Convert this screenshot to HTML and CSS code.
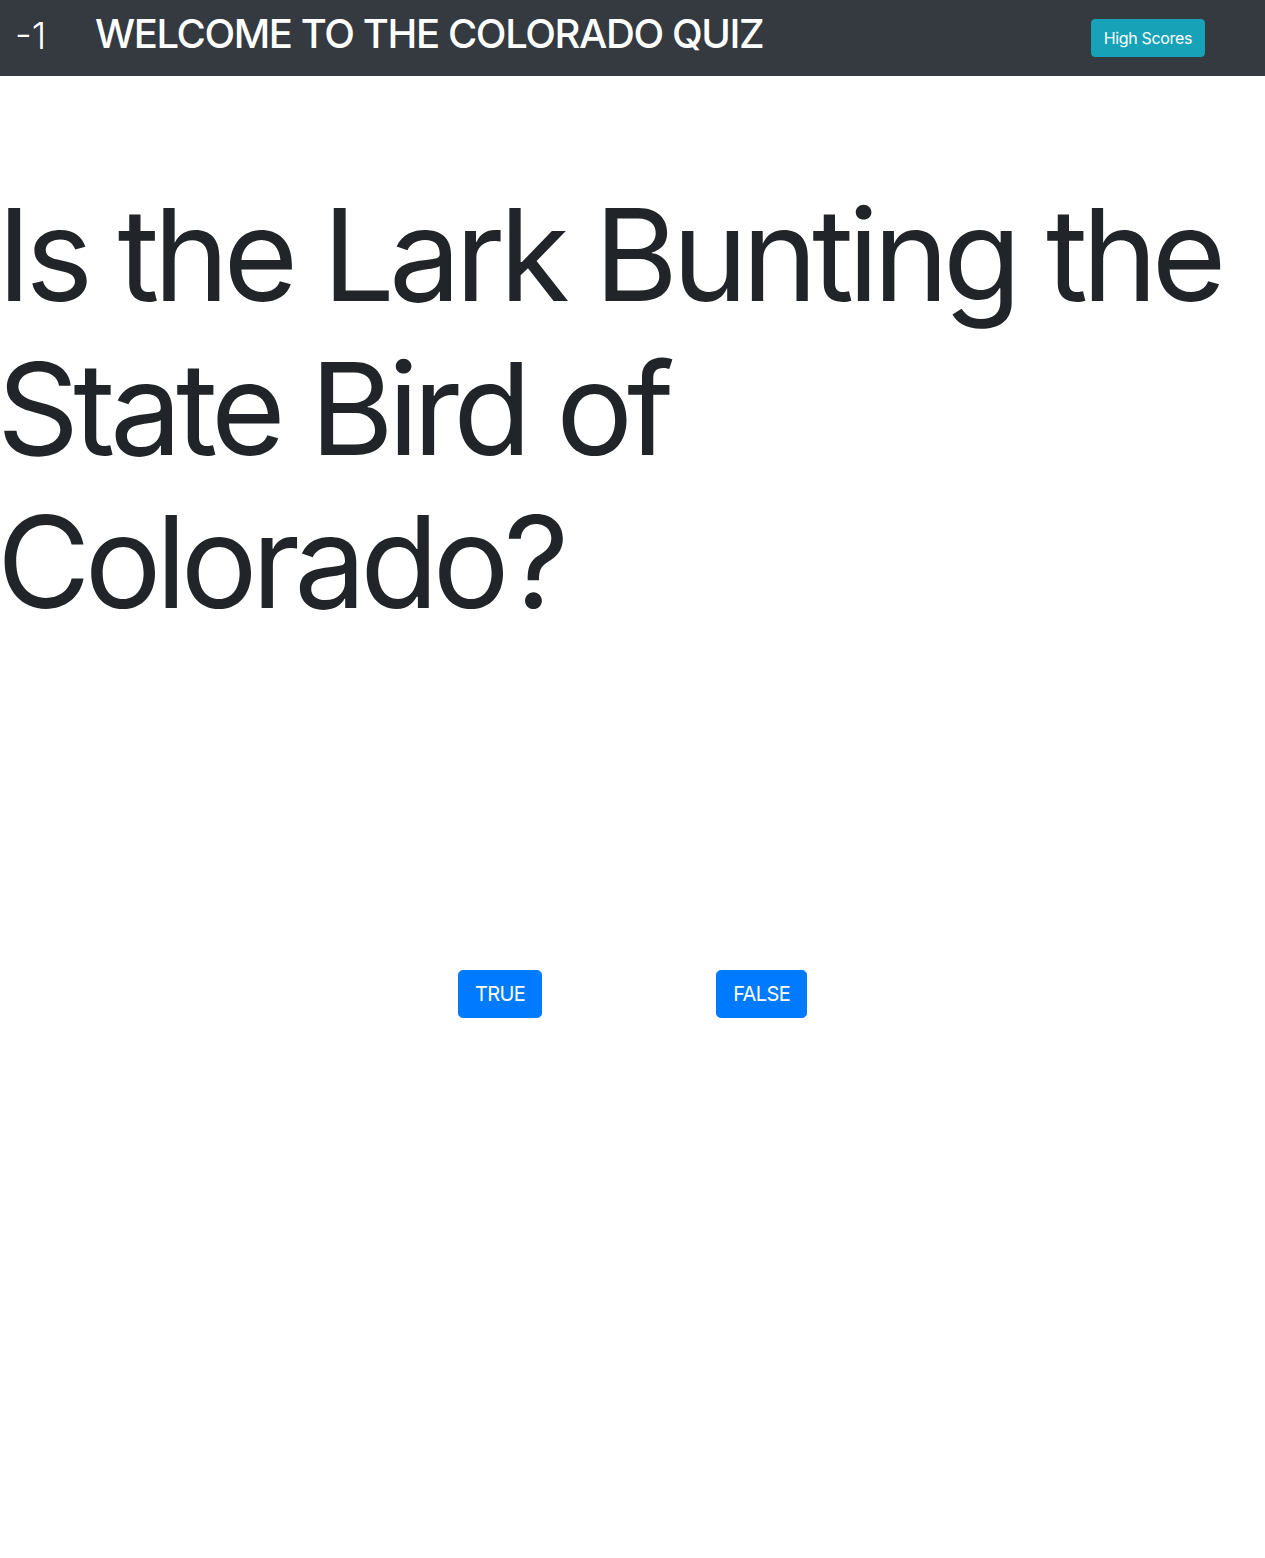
FILE: index.html
```html
<!DOCTYPE html>
<html lang="en">
<head>
<meta charset="utf-8">
<title>Colorado Quiz</title>
<link rel="stylesheet" href="styles.css">
</head>
<body>
<header class="topbar">
  <span class="score">-1</span>
  <h1 class="title">WELCOME TO THE COLORADO QUIZ</h1>
  <button class="btn btn-info">High Scores</button>
</header>
<main class="quiz">
  <h2 class="question">Is the Lark Bunting the State Bird of Colorado?</h2>
  <div class="answers">
    <button class="btn btn-primary btn-lg">TRUE</button>
    <button class="btn btn-primary btn-lg">FALSE</button>
  </div>
</main>
</body>
</html>
```
FILE: styles.css
```css
* { box-sizing: border-box; }
html, body { margin: 0; padding: 0; }
body {
  font-family: Inter, "Noto Sans", "Liberation Sans", sans-serif;
  color: #212529;
  background: #fff;
}
.topbar {
  height: 76px;
  background: #343a40;
  display: flex;
  align-items: flex-start;
  padding: 0 60px 0 15px;
  color: #fff;
}
.score {
  font-size: 37px;
  font-weight: 300;
  line-height: 1.2;
  margin-top: 14px;
  width: 80px;
}
.title {
  margin: 10px 0 0 0;
  font-size: 40px;
  font-weight: 500;
  line-height: 1.2;
  letter-spacing: -1.4px;
  flex: 1;
}
.btn {
  font-family: inherit;
  border: 1px solid transparent;
  color: #fff;
  cursor: pointer;
  border-radius: 4px;
}
.btn-info {
  margin-top: 19px;
  background: #17a2b8;
  border-color: #17a2b8;
  font-size: 16px;
  line-height: 24px;
  padding: 6px 12px;
  height: 38px;
  letter-spacing: -0.35px;
}
.quiz { padding-top: 102px; }
.question {
  margin: 0 0 0 -3px;
  font-size: 128px;
  font-weight: 400;
  line-height: 1.2;
  letter-spacing: -5.8px;
}
.answers {
  display: flex;
  justify-content: center;
  gap: 174px;
  margin-top: 331px;
}
.btn-primary {
  background: #007bff;
  border-color: #007bff;
}
.btn-lg {
  font-size: 20px;
  line-height: 30px;
  padding: 8px 16px;
  height: 48px;
  border-radius: 4.8px;
  letter-spacing: -0.6px;
}
```
